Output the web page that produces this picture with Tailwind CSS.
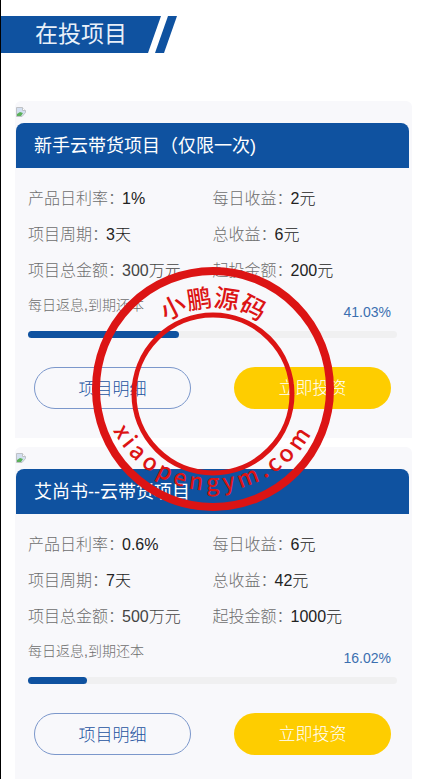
<!DOCTYPE html>
<html lang="zh-CN">
  <head>
    <meta charset="UTF-8" />
    <meta name="viewport" content="width=device-width, initial-scale=1.0" />
    <title>在投项目</title>
    <script src="https://cdn.jsdelivr.net/npm/@tailwindcss/browser@4"></script>
  </head>
  <body class="relative min-h-screen bg-white border-l border-black font-['Liberation_Sans','Noto_Sans_CJK_SC',sans-serif]">
    <!-- Section banner -->
    <header class="pt-4 flex">
      <div class="h-[37px] w-40 pl-[34px] bg-[#0f52a0] [clip-path:polygon(0_0,100%_0,147px_100%,0_100%)]">
        <h1 class="text-[23px] leading-9 text-[#e9f0f9] whitespace-nowrap">在投项目</h1>
      </div>
      <div class="-ml-1.5 h-[37px] w-[22px] bg-[#0f52a0] [clip-path:polygon(13px_0,100%_0,9px_100%,0_100%)]"></div>
    </header>

    <main class="mt-12 pl-3.5 pr-[13px] space-y-[9px]">
      <!-- Project 1 -->
      <article class="bg-[#f8f8fb] rounded-t-md pt-1.5 pl-px pr-[3px] pb-[29px]">
        <svg class="block mb-1.5 size-2.5" viewBox="0 0 10 10" aria-hidden="true">
          <path d="M0.5 0.5h6l3 3v2L6 9.5H0.5z" fill="#d3dff0" stroke="#bfc2c6" />
          <path d="M6.5 0.5v3h3" fill="#fff" stroke="#bfc2c6" />
          <path d="M1 9V7l3-2 3 1-2 3z" fill="#5bb05a" />
        </svg>
        <h2 class="h-[45px] rounded-t-lg bg-[#0f52a0] pl-[18px] text-lg leading-[46px] text-white">新手云带货项目（仅限一次)</h2>
        <div class="px-3 pt-[13px]">
          <dl class="grid grid-cols-2 text-base leading-9 whitespace-nowrap">
            <div class="flex"><dt class="-mr-0.5 font-light text-[#6e6e6e]">产品日利率：</dt><dd class="font-light text-[#222]">1%</dd></div>
            <div class="flex"><dt class="-mr-0.5 font-light text-[#6e6e6e]">每日收益：</dt><dd class="font-light text-[#222]">2元</dd></div>
            <div class="flex"><dt class="-mr-0.5 font-light text-[#6e6e6e]">项目周期：</dt><dd class="font-light text-[#222]">3天</dd></div>
            <div class="flex"><dt class="-mr-0.5 font-light text-[#6e6e6e]">总收益：</dt><dd class="font-light text-[#222]">6元</dd></div>
            <div class="flex"><dt class="-mr-0.5 font-light text-[#6e6e6e]">项目总金额：</dt><dd class="font-light text-[#444]">300万元</dd></div>
            <div class="flex"><dt class="-mr-0.5 font-light text-[#6e6e6e]">起投金额：</dt><dd class="font-light text-[#222]">200元</dd></div>
          </dl>
          <div class="flex justify-between text-sm pr-1.5 h-[42px]">
            <p class="leading-8 font-light text-[#6e6e6e]">每日返息,到期还本</p>
            <p class="leading-[46px] text-[#3b6fb0]">41.03%</p>
          </div>
          <div class="h-[7px] rounded-full bg-[#f0f0f1]">
            <div class="h-full rounded-full bg-[#0f52a0]" style="width: 41.03%"></div>
          </div>
          <div class="mt-[29px] px-1.5 grid grid-cols-2 gap-[43px] text-[17px] leading-10">
            <button type="button" class="h-[42px] pt-0.5 rounded-full border border-[#7b97cb] font-light text-[#1c529f]">项目明细</button>
            <button type="button" class="h-[42px] pt-0.5 rounded-full bg-[#fecd00] font-light text-white">立即投资</button>
          </div>
        </div>
      </article>

      <!-- Project 2 -->
      <article class="bg-[#f8f8fb] rounded-t-md pt-1.5 pl-px pr-[3px] pb-[29px]">
        <svg class="block mb-1.5 size-2.5" viewBox="0 0 10 10" aria-hidden="true">
          <path d="M0.5 0.5h6l3 3v2L6 9.5H0.5z" fill="#d3dff0" stroke="#bfc2c6" />
          <path d="M6.5 0.5v3h3" fill="#fff" stroke="#bfc2c6" />
          <path d="M1 9V7l3-2 3 1-2 3z" fill="#5bb05a" />
        </svg>
        <h2 class="h-[45px] rounded-t-lg bg-[#0f52a0] pl-[18px] text-lg leading-[46px] text-white">艾尚书--云带货项目</h2>
        <div class="px-3 pt-[13px]">
          <dl class="grid grid-cols-2 text-base leading-9 whitespace-nowrap">
            <div class="flex"><dt class="-mr-0.5 font-light text-[#6e6e6e]">产品日利率：</dt><dd class="font-light text-[#222]">0.6%</dd></div>
            <div class="flex"><dt class="-mr-0.5 font-light text-[#6e6e6e]">每日收益：</dt><dd class="font-light text-[#222]">6元</dd></div>
            <div class="flex"><dt class="-mr-0.5 font-light text-[#6e6e6e]">项目周期：</dt><dd class="font-light text-[#222]">7天</dd></div>
            <div class="flex"><dt class="-mr-0.5 font-light text-[#6e6e6e]">总收益：</dt><dd class="font-light text-[#222]">42元</dd></div>
            <div class="flex"><dt class="-mr-0.5 font-light text-[#6e6e6e]">项目总金额：</dt><dd class="font-light text-[#444]">500万元</dd></div>
            <div class="flex"><dt class="-mr-0.5 font-light text-[#6e6e6e]">起投金额：</dt><dd class="font-light text-[#222]">1000元</dd></div>
          </dl>
          <div class="flex justify-between text-sm pr-1.5 h-[42px]">
            <p class="leading-8 font-light text-[#6e6e6e]">每日返息,到期还本</p>
            <p class="leading-[46px] text-[#3b6fb0]">16.02%</p>
          </div>
          <div class="h-[7px] rounded-full bg-[#f0f0f1]">
            <div class="h-full rounded-full bg-[#0f52a0]" style="width: 16.02%"></div>
          </div>
          <div class="mt-[29px] px-1.5 grid grid-cols-2 gap-[43px] text-[17px] leading-10">
            <button type="button" class="h-[42px] pt-0.5 rounded-full border border-[#7b97cb] font-light text-[#1c529f]">项目明细</button>
            <button type="button" class="h-[42px] pt-0.5 rounded-full bg-[#fecd00] font-light text-white">立即投资</button>
          </div>
        </div>
      </article>
    </main>

    <!-- Round stamp over the cards -->
    <svg class="absolute top-[267px] left-1/2 -translate-x-1/2 w-[242px] h-[244px] pointer-events-none font-['Noto_Sans_CJK_SC',sans-serif]" viewBox="0 0 242 244">
      <defs>
        <path id="arcTop" d="M41 120a80 80 0 0 1 160 0" />
        <path id="arcBottom" d="M8 111a113 113 0 0 0 226 0" />
      </defs>
      <g fill="none" stroke="#dc1414">
        <ellipse cx="121" cy="122" rx="117" ry="118" stroke-width="8" />
        <circle cx="121" cy="127" r="79" stroke-width="5" />
      </g>
      <g fill="#dc1414" text-anchor="middle" class="font-medium">
        <text class="text-[25px]"><textPath href="#arcTop" startOffset="50%">小鹏源码</textPath></text>
        <text class="text-[23px] tracking-[4px]"><textPath href="#arcBottom" startOffset="50%">xiaopengym.com</textPath></text>
      </g>
    </svg>
  </body>
</html>
